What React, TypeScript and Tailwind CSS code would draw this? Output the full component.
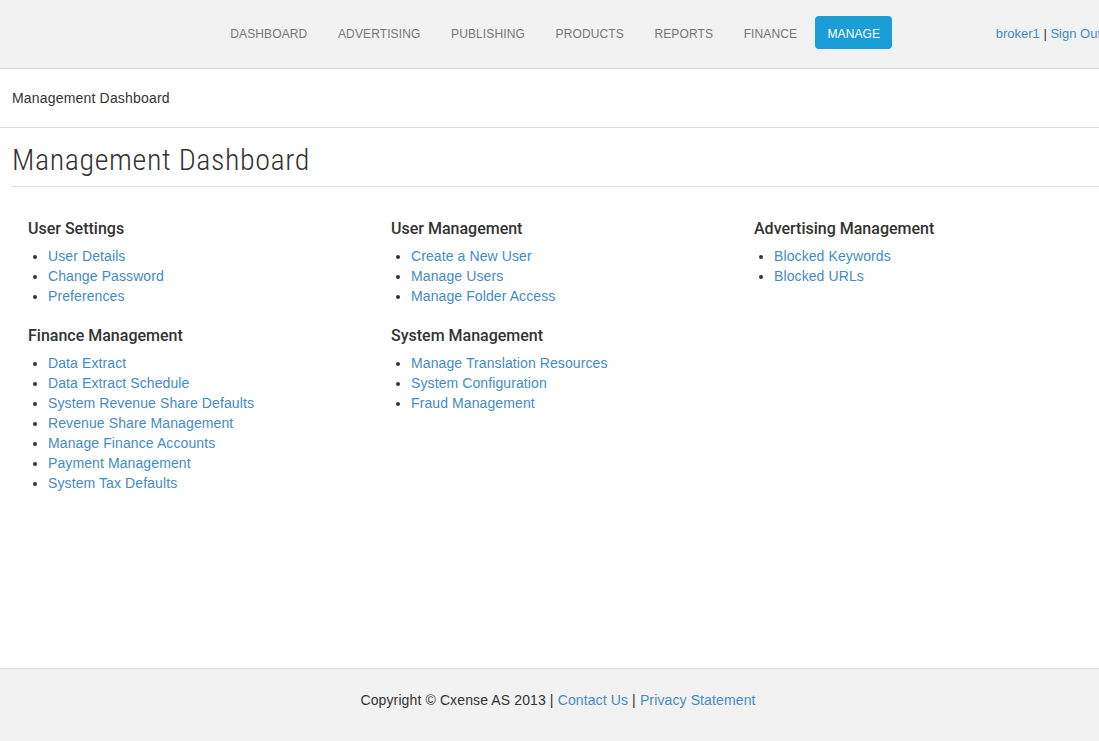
import React from "react";

const sections = [
  [
    { title: "User Settings", links: ["User Details", "Change Password", "Preferences"] },
    {
      title: "Finance Management",
      links: [
        "Data Extract",
        "Data Extract Schedule",
        "System Revenue Share Defaults",
        "Revenue Share Management",
        "Manage Finance Accounts",
        "Payment Management",
        "System Tax Defaults",
      ],
    },
  ],
  [
    { title: "User Management", links: ["Create a New User", "Manage Users", "Manage Folder Access"] },
    {
      title: "System Management",
      links: ["Manage Translation Resources", "System Configuration", "Fraud Management"],
    },
  ],
  [{ title: "Advertising Management", links: ["Blocked Keywords", "Blocked URLs"] }],
];

const navItems = ["Dashboard", "Advertising", "Publishing", "Products", "Reports", "Finance"];

function Section({ title, links }: { title: string; links: string[] }) {
  return (
    <div className="mb-5">
      <h3 className="font-['Roboto',sans-serif] font-medium text-[16px] leading-5 text-[#333] mb-[7px]">{title}</h3>
      <ul className="list-disc pl-5 text-[14px] leading-5 tracking-[0.1px] marker:text-[#333]">
        {links.map((l) => (
          <li key={l}>
            <a href="#" className="text-[#428bca]">
              {l}
            </a>
          </li>
        ))}
      </ul>
    </div>
  );
}

export default function App() {
  return (
    <div className="w-full overflow-hidden">
      <div className="w-[1116px] min-h-[741px] flex flex-col bg-white font-['Liberation_Sans',Arial,sans-serif] text-[#333]">
        <header className="h-[69px] bg-[#f2f2f2] border-b border-[#dcdcdc] flex items-start pt-4 pl-[215px] pr-[15px]">
          <nav className="flex items-start text-[12px] tracking-[0.12px]">
            {navItems.map((n) => (
              <a key={n} href="#" className="h-[33px] pt-[2px] flex items-center px-[15.3px] uppercase text-[#777]">
                {n}
              </a>
            ))}
            <a href="#" className="ml-[3px] h-[33px] pt-[2px] px-3 flex items-center rounded-[4px] bg-[#1b9dd5] text-white uppercase">
              Manage
            </a>
          </nav>
          <div className="ml-auto h-[33px] pt-[2px] flex items-center whitespace-nowrap text-[13px]">
            <a href="#" className="text-[#428bca]">broker1</a>
            <span className="text-[#333]">&nbsp;|&nbsp;</span>
            <a href="#" className="text-[#428bca]">Sign Out</a>
          </div>
        </header>

        <div className="h-[59px] border-b border-[#dcdcdc] flex items-center pl-3 text-[14px] tracking-[0.18px]">
          Management Dashboard
        </div>

        <main className="flex-1 pl-3">
          <h1 className="font-['Roboto',sans-serif] font-light text-[30px] leading-[36px] [font-stretch:condensed] tracking-[0.6px] text-[#333] pt-[14px] pb-[8px] border-b border-[#dcdcdc]">
            Management Dashboard
          </h1>
          <div className="grid grid-cols-[363px_363px_1fr] pt-[32px] pl-[16px]">
            {sections.map((col, i) => (
              <div key={i}>
                {col.map((s) => (
                  <Section key={s.title} title={s.title} links={s.links} />
                ))}
              </div>
            ))}
          </div>
        </main>

        <footer className="h-[73px] bg-[#f2f2f2] border-t border-[#dcdcdc] flex justify-center pt-[21px] text-[14px] leading-5 tracking-[0.12px]">
          <p>
            Copyright © Cxense AS 2013 |{" "}
            <a href="#" className="text-[#428bca]">Contact Us</a> |{" "}
            <a href="#" className="text-[#428bca]">Privacy Statement</a>
          </p>
        </footer>
      </div>
    </div>
  );
}
